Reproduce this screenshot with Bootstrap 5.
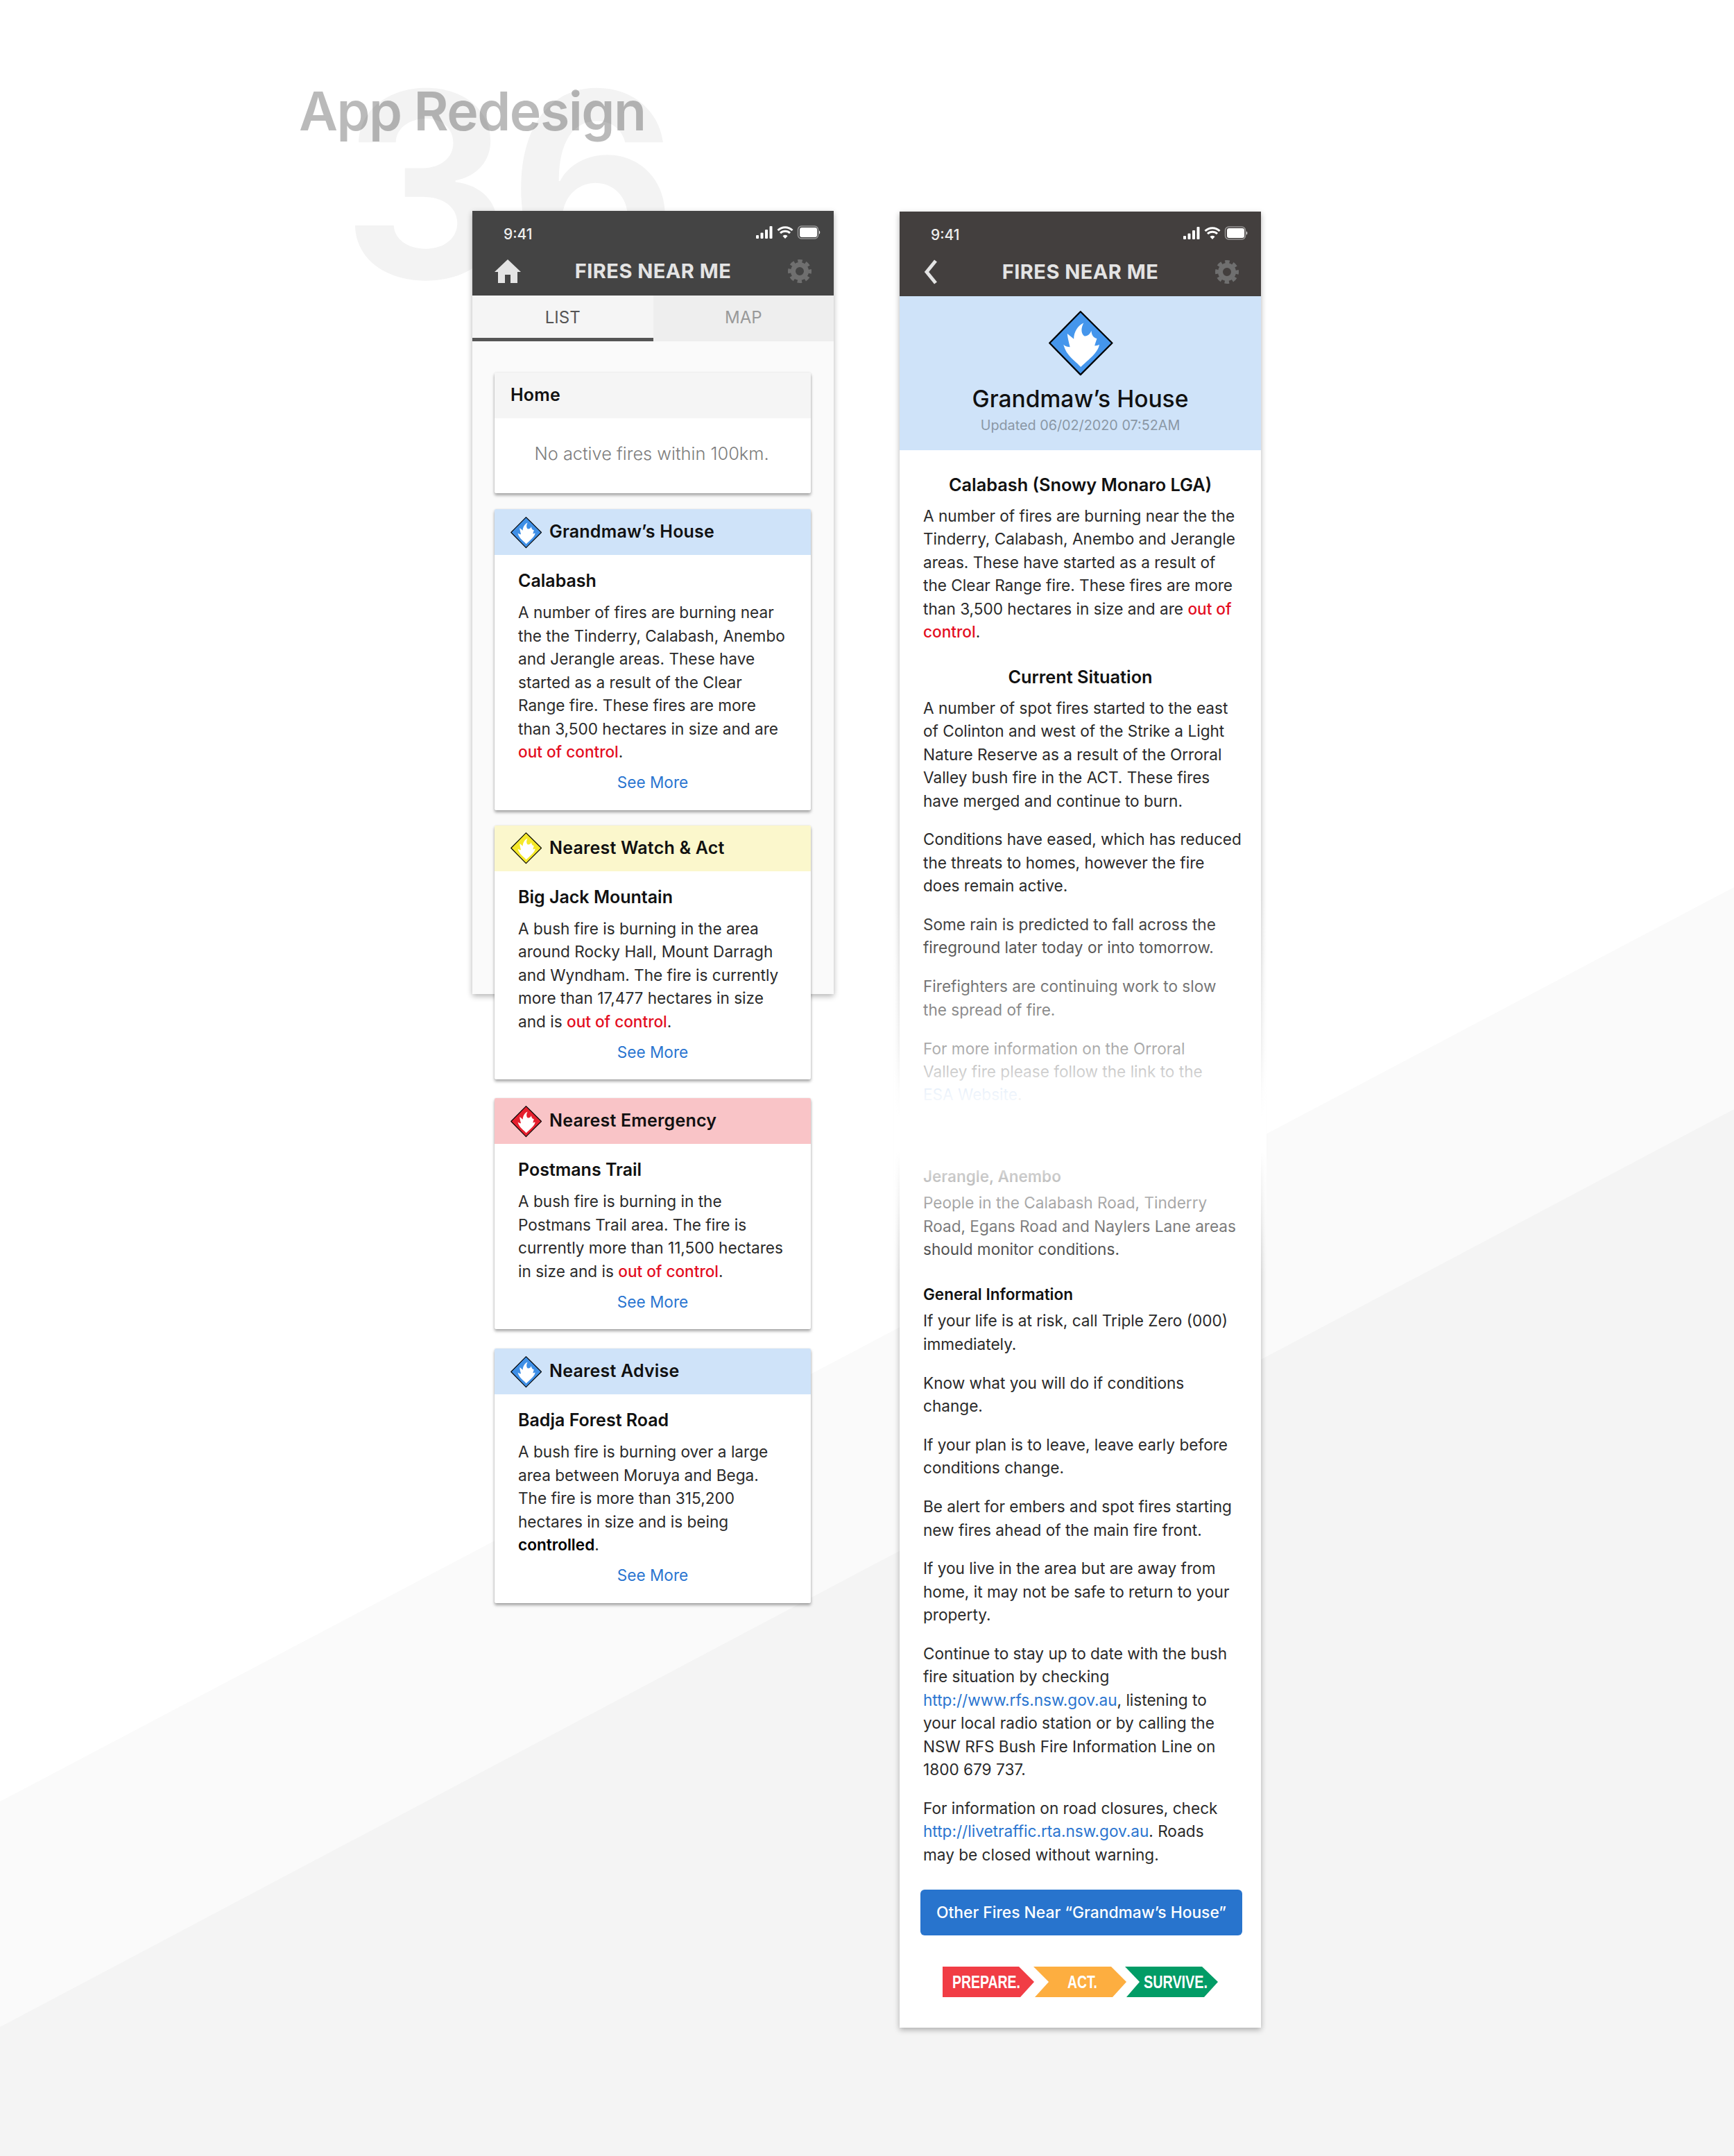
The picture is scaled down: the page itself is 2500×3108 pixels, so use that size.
<!DOCTYPE html>
<html lang="en">
<head>
    <meta charset="UTF-8">
    <meta name="viewport" content="width=device-width, initial-scale=1.0">
    <title>Fires Near Me - App Redesign</title>
    <link href="https://cdn.jsdelivr.net/npm/bootstrap@5.3.0/dist/css/bootstrap.min.css" rel="stylesheet">
    <style>
        body { background: #fff; font-family: "Inter", "Liberation Sans", sans-serif; color: #222; margin: 0; }
        .board { position: relative; width: 2500px; height: 3108px; overflow: hidden; }
        .bands { position: absolute; left: 0; top: 0; }
        .big-num { position: absolute; left: 494px; top: 80px; font-size: 372px; line-height: 1; font-weight: 700; color: #f3f3f3; }
        .heading { position: relative; height: 304px; padding: 122px 0 0 431px; }
        .heading h1 { font-size: 77px; line-height: 1; font-weight: 600; color: rgba(0,0,0,.27); margin: 0; letter-spacing: -1.5px; }
        .phones { position: relative; gap: 95px; padding-left: 681px; }
        .phone { width: 521px; background: #fafafa; box-shadow: 0 3px 8px rgba(0,0,0,.3); }
        .phone-list { height: 1129px; }
        .phone-detail { height: 2618px; margin-top: 1px; background: #fff; position: relative; }
        .topbar { height: 122px; background: #444; color: #e5e5e5; }
        .phone-detail .topbar { background: #433f3e; }
        .status { height: 64px; padding: 18px 18px 0 45px; font-size: 21px; font-weight: 500; color: #eee; }
        .status svg { margin-top: 3px; }
        .appbar { height: 58px; padding: 0 32px 12px; }
        .app-title { font-size: 29px; font-weight: 700; letter-spacing: .45px; color: #e4e4e4; }
        .gear-slot { width: 38px; text-align: right; line-height: 0; }
        .tab-on, .tab-off { width: 50%; height: 66px; text-align: center; font-size: 24px; line-height: 63px; }
        .tab-on { background: #f5f5f5; color: #555; border-bottom: 5px solid #555; }
        .tab-off { background: #eee; color: #999; }
        .feed { padding: 45px 33px 0 32px; }
        .alert-card { border: 0; border-radius: 2px; box-shadow: 0 3px 4px rgba(0,0,0,.35), 0 0 2px rgba(0,0,0,.12); margin-bottom: 23px; background: #fff; }
        .alert-card .card-header { height: 66px; border: 0; border-radius: 2px 2px 0 0; padding: 0 0 0 22px; font-size: 25px; letter-spacing: .2px; font-weight: 600; color: #111; gap: 10px; }
        .alert-card .card-body { padding: 21px 34px 23px; font-size: 22.6px; line-height: 33.5px; color: #2a2a2a; }
        .alert-card h5 { font-size: 25px; font-weight: 600; line-height: 33.5px; margin: 0 0 11.5px; color: #111; }
        .alert-card p { margin: 0 0 10.5px; white-space: nowrap; }
        .alert-card.tight-gap { margin-bottom: 22px; }
        .wide-gap { margin-top: 27px; }
        .wider-gap { margin-top: 28px; }
        .hd-home { background: #f5f5f5; padding-left: 23px !important; }
        .hd-blue { background: #cfe3f9; }
        .hd-yellow { background: #fbf7cc; }
        .hd-red { background: #f9c4c7; }
        .empty-note { height: 108px; font-size: 25.4px; font-weight: 300; color: #7d7d7d; padding: 0 3px 5px 0; }
        .see-more, .detail a { color: #2a75d0; text-decoration: none; }
        .hot { color: #e30d1f; font-weight: 500; }
        .hero { height: 222px; background: #cfe3f9; padding-top: 19px; text-align: center; }
        .hero h2 { font-size: 33.6px; line-height: 40px; font-weight: 500; color: #111; margin: 12px 0 0; }
        .hero div { font-size: 19.8px; color: #8a97a5; line-height: 28px; margin-top: 4px; }
        .detail { padding: 33px 34px 0; font-size: 22.6px; line-height: 33.42px; color: #2a2a2a; position: relative; }
        .detail h5 { font-size: 25.3px; font-weight: 600; line-height: 33.42px; margin: 0 0 11.5px; text-align: center; color: #111; }
        .detail h6 { font-size: 22.5px; font-weight: 600; line-height: 33.42px; margin: 0 0 5px; color: #111; }
        .detail p { margin: 0 0 22.4px; white-space: nowrap; }
        .detail .after-head { margin-bottom: 31.5px; }
        .detail .before-gap { margin-bottom: 84px; }
        .fade-out { position: absolute; left: -8px; right: -8px; top: 641px; height: 550px;
            background: linear-gradient(to bottom, rgba(255,255,255,0) 0, rgba(255,255,255,.35) 130px, rgba(255,255,255,.6) 220px, rgba(255,255,255,.92) 287px, #fff 320px, #fff 370px, rgba(255,255,255,.78) 405px, rgba(255,255,255,.6) 443px, rgba(255,255,255,.2) 510px, rgba(255,255,255,0) 550px); }
        .cta { display: block; width: 464px; height: 66px; margin: 34px auto 0 -4px; padding: 0; background: #2874cd; border: 0; border-radius: 6px; color: #fff; font-size: 22.8px; font-weight: 500; line-height: 62px; }
        .pas { display: block; margin: 45px 0 0 28px; }
        .pas text { font-family: "Liberation Sans Narrow", "Liberation Sans", sans-serif; font-weight: 700; font-size: 26px; fill: #fff; }
    </style>
</head>
<body>
    <svg width="0" height="0" class="position-absolute">
        <symbol id="flame-diamond" viewBox="55 40 295 300">
            <path d="M202 50 L343 190 L202 331 L64 190Z" fill="currentColor" stroke="#000" stroke-width="7" stroke-linejoin="round"/>
            <path d="M203 297 C180 270 140 250 126 197 C135 205 145 208 155 208 C150 185 145 170 143 148 C155 158 165 165 172 172 C172 140 190 112 216 100 C205 120 202 145 218 158 C232 162 245 150 250 135 C252 155 258 165 275 170 C272 180 268 190 265 202 C272 202 280 200 286 197 C280 235 235 265 203 297Z" fill="#fff"/>
        </symbol>
        <symbol id="gear" viewBox="0 0 34 34">
            <circle cx="17" cy="17" r="9.500" fill="none" stroke="currentColor" stroke-width="7"/>
            <circle cx="17" cy="17" r="14.500" fill="none" stroke="currentColor" stroke-width="5" stroke-dasharray="6.400 4.990" stroke-dashoffset="3.200"/>
        </symbol>
        <symbol id="status-icons" viewBox="0 0 94 20">
            <g fill="#fff">
                <rect x="0" y="14" width="4" height="5" rx="1"/><rect x="6.500" y="10.500" width="4" height="8.500" rx="1"/>
                <rect x="13" y="6" width="4" height="13" rx="1"/><rect x="19.500" y="1" width="4" height="18" rx="1"/>
                <rect x="63" y="3" width="25" height="14" rx="3"/>
                <path d="M91 7.500c1.600.5 1.600 4.500 0 5z"/>
                <path d="M42 19 38.500 15.200a5 5 0 0 1 7 0z"/>
            </g>
            <rect x="60.500" y="1" width="29" height="18" rx="5" fill="none" stroke="#fff" stroke-opacity=".45" stroke-width="1.500"/>
            <path d="M35 11a10 10 0 0 1 14 0M31.500 7a15 15 0 0 1 21 0" fill="none" stroke="#fff" stroke-width="3"/>
        </symbol>
    </svg>

    <div class="board">
        <svg class="bands" width="2500" height="3108" viewBox="0 0 2500 3108">
            <polygon points="0,2597 2500,1279 2500,3108 0,3108" fill="#fafafa"/>
            <polygon points="0,2922 2500,1599 2500,3108 0,3108" fill="#f4f4f4"/>
        </svg>
        <div class="big-num">36</div>

        <div class="heading"><h1>App Redesign</h1></div>

        <div class="phones d-flex align-items-start">
            <!-- list screen -->
            <div class="phone phone-list">
                <div class="topbar">
                    <div class="status d-flex justify-content-between">
                        <span>9:41</span>
                        <svg width="94" height="20"><use href="#status-icons"/></svg>
                    </div>
                    <div class="appbar d-flex align-items-center justify-content-between">
                        <svg width="38" height="34" viewBox="0 0 38 34"><path d="M19 0 38 18H33V34H23V22H15V34H5V18H0Z" fill="#e4e4e4"/></svg>
                        <span class="app-title">FIRES NEAR ME</span>
                        <span class="gear-slot"><svg width="34" height="34"><use href="#gear" color="#6f6f6f"/></svg></span>
                    </div>
                </div>
                <div class="d-flex">
                    <div class="tab-on">LIST</div>
                    <div class="tab-off">MAP</div>
                </div>
                <div class="feed">
                    <div class="card alert-card">
                        <div class="card-header hd-home d-flex align-items-center">Home</div>
                        <div class="empty-note d-flex align-items-center justify-content-center">No active fires within 100km.</div>
                    </div>

                    <div class="card alert-card tight-gap">
                        <div class="card-header hd-blue d-flex align-items-center">
                            <svg width="47" height="47" color="#3f8fe6"><use href="#flame-diamond"/></svg>Grandmaw’s House
                        </div>
                        <div class="card-body">
                            <h5>Calabash</h5>
                            <p>A number of fires are burning near<br>the the Tinderry, Calabash, Anembo<br>and Jerangle areas. These have<br>started as a result of the Clear<br>Range fire. These fires are more<br>than 3,500 hectares in size and are<br><span class="hot">out of control</span>.</p>
                            <div class="text-center"><a class="see-more" href="#">See More</a></div>
                        </div>
                    </div>

                    <div class="card alert-card">
                        <div class="card-header hd-yellow d-flex align-items-center">
                            <svg width="47" height="47" color="#f5e829"><use href="#flame-diamond"/></svg>Nearest Watch &amp; Act
                        </div>
                        <div class="card-body">
                            <h5>Big Jack Mountain</h5>
                            <p>A bush fire is burning in the area<br>around Rocky Hall, Mount Darragh<br>and Wyndham. The fire is currently<br>more than 17,477 hectares in size<br>and is <span class="hot">out of control</span>.</p>
                            <div class="text-center"><a class="see-more" href="#">See More</a></div>
                        </div>
                    </div>

                    <div class="card alert-card wide-gap">
                        <div class="card-header hd-red d-flex align-items-center">
                            <svg width="47" height="47" color="#e5202e"><use href="#flame-diamond"/></svg>Nearest Emergency
                        </div>
                        <div class="card-body">
                            <h5>Postmans Trail</h5>
                            <p>A bush fire is burning in the<br>Postmans Trail area. The fire is<br>currently more than 11,500 hectares<br>in size and is <span class="hot">out of control</span>.</p>
                            <div class="text-center"><a class="see-more" href="#">See More</a></div>
                        </div>
                    </div>

                    <div class="card alert-card wider-gap">
                        <div class="card-header hd-blue d-flex align-items-center">
                            <svg width="47" height="47" color="#3f8fe6"><use href="#flame-diamond"/></svg>Nearest Advise
                        </div>
                        <div class="card-body">
                            <h5>Badja Forest Road</h5>
                            <p>A bush fire is burning over a large<br>area between Moruya and Bega.<br>The fire is more than 315,200<br>hectares in size and is being<br><strong class="fw-semibold text-black">controlled</strong>.</p>
                            <div class="text-center"><a class="see-more" href="#">See More</a></div>
                        </div>
                    </div>
                </div>
            </div>

            <!-- detail screen -->
            <div class="phone phone-detail">
                <div class="topbar">
                    <div class="status d-flex justify-content-between">
                        <span>9:41</span>
                        <svg width="94" height="20"><use href="#status-icons"/></svg>
                    </div>
                    <div class="appbar d-flex align-items-center justify-content-between">
                        <svg width="38" height="38" viewBox="0 0 38 38"><path d="M20 3 7 19 20 35" fill="none" stroke="#e4e4e4" stroke-width="5"/></svg>
                        <span class="app-title">FIRES NEAR ME</span>
                        <span class="gear-slot"><svg width="34" height="34"><use href="#gear" color="#6f6f6f"/></svg></span>
                    </div>
                </div>
                <div class="hero">
                    <svg width="96" height="97" color="#4596ec"><use href="#flame-diamond"/></svg>
                    <h2>Grandmaw’s House</h2>
                    <div>Updated 06/02/2020 07:52AM</div>
                </div>
                <div class="detail">
                    <h5>Calabash (Snowy Monaro LGA)</h5>
                    <p class="after-head">A number of fires are burning near the the<br>Tinderry, Calabash, Anembo and Jerangle<br>areas. These have started as a result of<br>the Clear Range fire. These fires are more<br>than 3,500 hectares in size and are <span class="hot">out of<br>control</span>.</p>
                    <h5>Current Situation</h5>
                    <p>A number of spot fires started to the east<br>of Colinton and west of the Strike a Light<br>Nature Reserve as a result of the Orroral<br>Valley bush fire in the ACT. These fires<br>have merged and continue to burn.</p>
                    <p>Conditions have eased, which has reduced<br>the threats to homes, however the fire<br>does remain active.</p>
                    <p>Some rain is predicted to fall across the<br>fireground later today or into tomorrow.</p>
                    <p>Firefighters are continuing work to slow<br>the spread of fire.</p>
                    <p class="before-gap">For more information on the Orroral<br>Valley fire please follow the link to the<br><a href="#">ESA Website</a>.</p>
                    <h6>Jerangle, Anembo</h6>
                    <p class="after-head">People in the Calabash Road, Tinderry<br>Road, Egans Road and Naylers Lane areas<br>should monitor conditions.</p>
                    <h6>General Information</h6>
                    <p>If your life is at risk, call Triple Zero (000)<br>immediately.</p>
                    <p>Know what you will do if conditions<br>change.</p>
                    <p>If your plan is to leave, leave early before<br>conditions change.</p>
                    <p>Be alert for embers and spot fires starting<br>new fires ahead of the main fire front.</p>
                    <p>If you live in the area but are away from<br>home, it may not be safe to return to your<br>property.</p>
                    <p>Continue to stay up to date with the bush<br>fire situation by checking<br><a href="#">http://www.rfs.nsw.gov.au</a>, listening to<br>your local radio station or by calling the<br>NSW RFS Bush Fire Information Line on<br>1800 679 737.</p>
                    <p>For information on road closures, check<br><a href="#">http://livetraffic.rta.nsw.gov.au</a>. Roads<br>may be closed without warning.</p>
                    <button class="btn btn-primary cta">Other Fires Near “Grandmaw’s House”</button>
                    <svg class="pas" width="425" height="44" viewBox="0 0 425 44">
                        <polygon points="0,0 110,0 132,22 112,44 0,44" fill="#f13d45"/>
                        <polygon points="131,0 243,0 265,22 245,44 133,44 153,22" fill="#fdae40"/>
                        <polygon points="263,0 374,0 397,22 377,44 265,44 284,22" fill="#029c66"/>
                        <text x="14" y="31" textLength="98" lengthAdjust="spacingAndGlyphs">PREPARE.</text>
                        <text x="180" y="31" textLength="43" lengthAdjust="spacingAndGlyphs">ACT.</text>
                        <text x="290" y="31" textLength="92" lengthAdjust="spacingAndGlyphs">SURVIVE.</text>
                    </svg>
                    <div class="fade-out"></div>
                </div>
            </div>
        </div>
    </div>
    <script src="https://cdn.jsdelivr.net/npm/bootstrap@5.3.0/dist/js/bootstrap.bundle.min.js"></script>
</body>
</html>
